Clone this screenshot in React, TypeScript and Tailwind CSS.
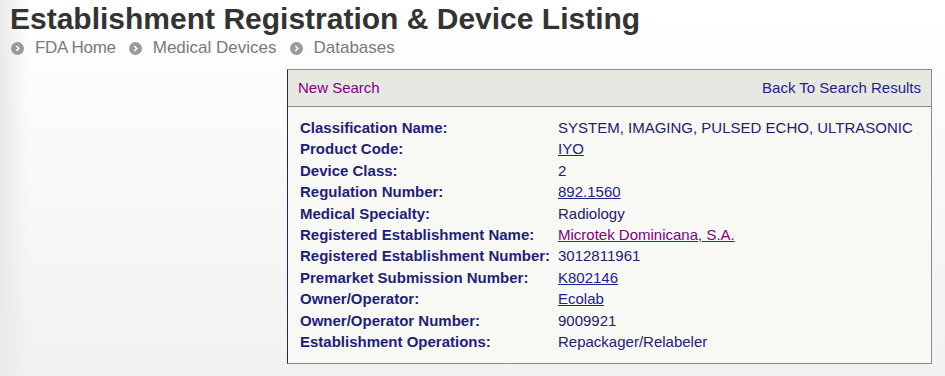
import React from 'react'

type Row = {
  label: string
  value: string
  link?: boolean
  visited?: boolean
}

const rows: Row[] = [
  { label: 'Classification Name:', value: 'SYSTEM, IMAGING, PULSED ECHO, ULTRASONIC' },
  { label: 'Product Code:', value: 'IYO', link: true },
  { label: 'Device Class:', value: '2' },
  { label: 'Regulation Number:', value: '892.1560', link: true },
  { label: 'Medical Specialty:', value: 'Radiology' },
  { label: 'Registered Establishment Name:', value: 'Microtek Dominicana, S.A.', link: true, visited: true },
  { label: 'Registered Establishment Number:', value: '3012811961' },
  { label: 'Premarket Submission Number:', value: 'K802146', link: true },
  { label: 'Owner/Operator:', value: 'Ecolab', link: true },
  { label: 'Owner/Operator Number:', value: '9009921' },
  { label: 'Establishment Operations:', value: 'Repackager/Relabeler' },
]

const Bullet = () => (
  <svg width="13" height="13" viewBox="0 0 13 13" className="shrink-0">
    <circle cx="6.5" cy="6.5" r="6.5" fill="#9a9a9a" />
    <path d="M5.3 4 L7.8 6.5 L5.3 9" stroke="#fff" strokeWidth="1.6" fill="none" />
  </svg>
)

const crumbs = ['FDA Home', 'Medical Devices', 'Databases']

export default function App() {
  return (
    <div
      className="relative min-h-[376px] w-full bg-gradient-to-b from-white to-[#f1f1f1]"
      style={{ fontFamily: '"Liberation Sans", Arial, sans-serif' }}
    >
      <div className="pointer-events-none absolute inset-y-0 left-0 w-[28px] bg-gradient-to-r from-[#e9e9e9] to-transparent" />
      <div className="relative">
        <h1 className="pl-[10px] pt-[3px] text-[30px] font-bold leading-[32px] text-[#333333]">
          Establishment Registration &amp; Device Listing
        </h1>
        <div className="flex items-center pl-[11px] pt-[3px] text-[17px] leading-[20px] text-[#7a7a7a]">
          {crumbs.map((c, i) => (
            <div key={c} className="flex items-center">
              <Bullet />
              <span className={`ml-[11px] mr-[13px] ${i === 0 ? 'tracking-[-0.3px]' : ''}`}>{c}</span>
            </div>
          ))}
        </div>

        <div className="ml-[287px] mt-[11px] w-[645px] border border-[#8a8a8a] border-l-[#22227a] bg-[#f8f8f4] text-[15px]">
          <div className="flex h-[37px] items-center justify-between border-b border-[#8a8a8a] bg-[#e8e8e3] pl-[10px] pr-[10px]">
            <a className="text-[#800080]">New Search</a>
            <a className="text-[#22228a]">Back To Search Results</a>
          </div>
          <div className="pb-[11px] pl-[12px] pt-[10px]">
            {rows.map((r) => (
              <div key={r.label} className="flex leading-[21.4px]">
                <div className="w-[258px] shrink-0 font-bold text-[#1f1f78]">{r.label}</div>
                <div
                  className={
                    r.visited
                      ? 'text-[#800080] underline'
                      : r.link
                        ? 'text-[#22228a] underline'
                        : 'text-[#22226e]'
                  }
                >
                  {r.value}
                </div>
              </div>
            ))}
          </div>
        </div>
      </div>
    </div>
  )
}
